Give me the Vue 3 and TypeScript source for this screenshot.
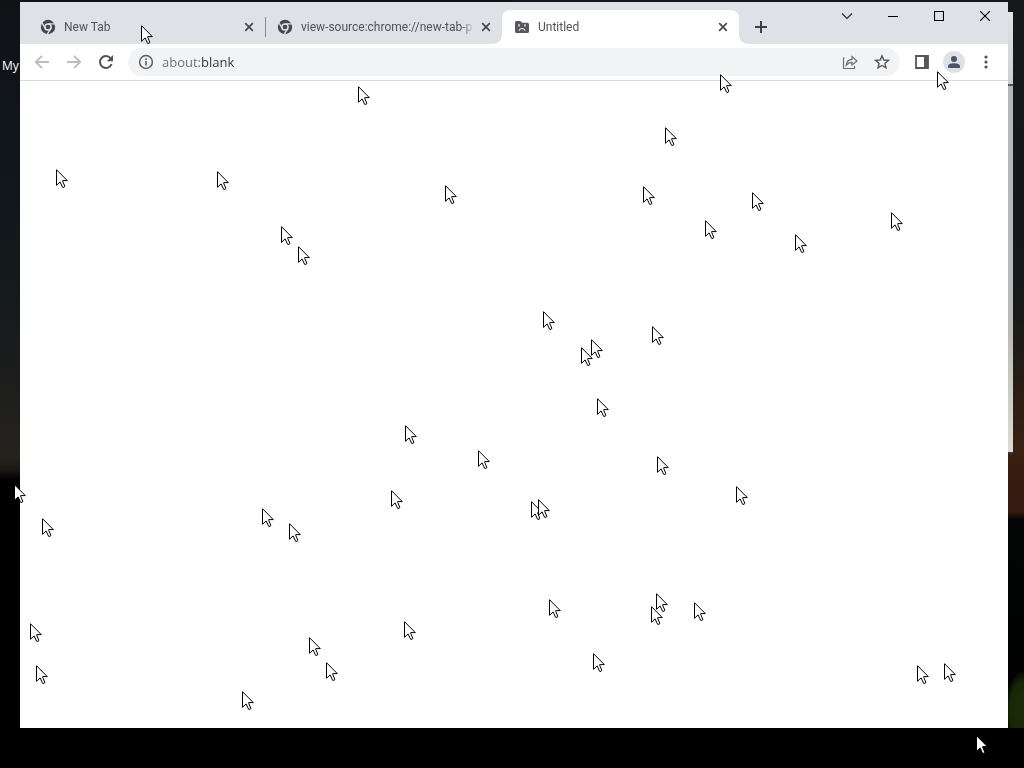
<script setup lang="ts">
import { ref } from 'vue'

interface Tab {
  title: string
  icon: 'chrome' | 'sad'
}
interface Point {
  x: number
  y: number
}

const tabs: Tab[] = [
  { title: 'New Tab', icon: 'chrome' },
  { title: 'view-source:chrome://new-tab-p', icon: 'chrome' },
  { title: 'Untitled', icon: 'sad' },
]
const active = ref(2)
const address = ref('about:blank')

const pointers: Point[] = (
  [
    [141, 25], [358, 86], [720, 74], [937, 71], [665, 127], [56, 169], [217, 171],
    [445, 185], [643, 186], [752, 192], [705, 220], [891, 212], [795, 234], [281, 226],
    [298, 246], [543, 311], [652, 326], [581, 347], [591, 339], [597, 398], [405, 425],
    [478, 450], [657, 456], [736, 486], [391, 490], [531, 501], [538, 499], [262, 508],
    [289, 523], [42, 518], [14, 484], [549, 599], [651, 606], [656, 593], [694, 602],
    [404, 621], [309, 637], [326, 662], [593, 653], [30, 623], [36, 665], [242, 691],
    [917, 665], [944, 663], [976, 735],
  ] as [number, number][]
).map(([x, y]) => ({ x, y }))
</script>

<template>
  <div class="desktop">
    <span class="shortcut">My</span>
    <div class="back-window"></div>

    <main class="window">
      <header class="strip">
        <div class="tabs" role="tablist">
          <div
            v-for="(tab, i) in tabs"
            :key="tab.title"
            class="tab"
            :class="{ active: i === active, divided: i + 1 < active }"
          >
            <button class="tab-main" role="tab" :aria-selected="i === active" @click="active = i">
              <svg v-if="tab.icon === 'chrome'" class="fav" viewBox="0 0 16 16">
                <circle cx="8" cy="8" r="7.2" fill="#45494e" />
                <circle cx="8" cy="8" r="3.1" fill="none" stroke="#dee1e6" stroke-width="1.5" />
                <path d="M8 4.9H15M5.3 9.5 1.9 3.6M10.7 9.5 7.2 15.4" stroke="#dee1e6" stroke-width="1.4" />
              </svg>
              <svg v-else class="fav" viewBox="0 0 16 16">
                <path d="M1 3.6Q1 2 2.6 2H6.4L8 3.7H13.4Q15 3.7 15 5.2V12.4Q15 14 13.4 14H2.6Q1 14 1 12.4Z" fill="#55585c" />
                <path d="M4.2 5.6 5.8 7.2M5.8 5.6 4.2 7.2M10.2 5.6 11.8 7.2M11.8 5.6 10.2 7.2M5 11.8Q5.2 9.5 8 9.5T11 11.8" fill="none" stroke="#fff" stroke-width="1" />
              </svg>
              <span class="title">{{ tab.title }}</span>
            </button>
            <button class="close" :aria-label="'Close ' + tab.title">
              <svg width="10" height="10" viewBox="0 0 10 10"><path d="M1.2 1.2 8.8 8.8M8.8 1.2 1.2 8.8" stroke="#45494e" stroke-width="1.7" /></svg>
            </button>
          </div>
        </div>
        <button class="new-tab" aria-label="New tab">
          <svg width="12" height="12" viewBox="0 0 12 12"><path d="M6 0V12M0 6H12" stroke="#3c4043" stroke-width="2" /></svg>
        </button>
        <div class="controls">
          <button aria-label="Search tabs">
            <svg width="12" height="12" viewBox="0 0 12 12"><path d="M1 3.5 6 8.5 11 3.5" fill="none" stroke="#222" stroke-width="1.1" /></svg>
          </button>
          <button aria-label="Minimize">
            <svg width="10" height="10" viewBox="0 0 10 10"><path d="M0 5.5H10" stroke="#000" /></svg>
          </button>
          <button aria-label="Maximize">
            <svg width="10" height="10" viewBox="0 0 10 10"><path d="M.5.5H9.5V9.5H.5Z" fill="none" stroke="#000" stroke-width="1.1" /></svg>
          </button>
          <button aria-label="Close window">
            <svg width="10" height="10" viewBox="0 0 10 10"><path d="M0 0 10 10M10 0 0 10" stroke="#000" stroke-width="1.1" /></svg>
          </button>
        </div>
      </header>

      <nav class="toolbar">
        <button class="tool" aria-label="Back">
          <svg width="16" height="16" viewBox="0 0 16 16"><path d="M15 8H2M8 1.8 1.8 8 8 14.2" fill="none" stroke="#bcbdbc" stroke-width="1.8" /></svg>
        </button>
        <button class="tool" aria-label="Forward">
          <svg width="16" height="16" viewBox="0 0 16 16"><path d="M1 8H14M8 1.8 14.2 8 8 14.2" fill="none" stroke="#bcbdbc" stroke-width="1.8" /></svg>
        </button>
        <button class="tool" aria-label="Reload">
          <svg width="16" height="16" viewBox="0 0 16 16">
            <path d="M13.6 10A6 6 0 1 1 12.6 4.1" fill="none" stroke="#4e5155" stroke-width="2" />
            <path d="M15 1V7.2H8.8Z" fill="#4e5155" />
          </svg>
        </button>
        <div class="omnibox">
          <button class="info" aria-label="View site information">
            <svg width="16" height="16" viewBox="0 0 16 16">
              <circle cx="8" cy="8" r="6.4" fill="none" stroke="#5a5e63" stroke-width="1.5" />
              <path d="M8 7V11.6M8 4.3V6" stroke="#5a5e63" stroke-width="1.6" />
            </svg>
          </button>
          <input v-model="address" class="address" aria-label="Address" spellcheck="false" />
          <button class="tool" aria-label="Share this page">
            <svg width="16" height="16" viewBox="0 0 16 16">
              <path d="M2.5 4H1.5V14.5H12.5V12M4.2 11.3C4.5 7.5 6.5 5.5 10 5.4V2.6L15 7 10 11V8.4C7.5 8.3 5.8 9.2 4.2 11.3Z" fill="none" stroke="#6b6f74" stroke-width="1.2" />
            </svg>
          </button>
          <button class="tool" aria-label="Bookmark this tab">
            <svg width="16" height="16" viewBox="0 0 16 16">
              <path d="M8 1.8 9.8 6 14.4 6.4 10.9 9.4 12 13.9 8 11.5 4 13.9 5.1 9.4 1.6 6.4 6.2 6Z" fill="none" stroke="#55595e" stroke-width="1.4" />
            </svg>
          </button>
        </div>
        <button class="tool" aria-label="Side panel">
          <svg width="14" height="14" viewBox="0 0 14 14"><path d="M1 1H13V13H1Z" fill="none" stroke="#55585b" stroke-width="1.8" /><path d="M9 1H13V13H9Z" fill="#55585b" /></svg>
        </button>
        <button class="tool" aria-label="Profile">
          <svg width="22" height="22" viewBox="0 0 22 22">
            <circle cx="11" cy="11" r="11" fill="#dde1e8" />
            <circle cx="11" cy="8" r="3" fill="#4c566b" />
            <path d="M5 17V15.2C5 13 8.5 12.2 11 12.2S17 13 17 15.2V17Z" fill="#4c566b" />
          </svg>
        </button>
        <button class="tool" aria-label="Menu">
          <svg width="4" height="14" viewBox="0 0 4 14" fill="#505357"><circle cx="2" cy="2" r="1.6" /><circle cx="2" cy="7" r="1.6" /><circle cx="2" cy="12" r="1.6" /></svg>
        </button>
      </nav>
      <section class="page"></section>
    </main>

    <svg
      v-for="(p, i) in pointers"
      :key="i"
      class="pointer"
      :style="{ left: p.x + 'px', top: p.y + 'px' }"
      width="12"
      height="19"
      viewBox="0 0 12 19"
    >
      <path d="M.5.7V16.3L4.1 12.9 6.6 18.3H8.2L8.8 17.2 6.7 12.3V11.6H11.3Z" fill="#fff" stroke="#000" stroke-width="1" />
    </svg>
  </div>
</template>

<style>
body {
  margin: 0;
  background: #000;
}
</style>

<style scoped>
.desktop {
  position: relative;
  display: flex;
  box-sizing: border-box;
  min-height: 100vh;
  padding: 2px 16px 40px 20px;
  overflow: hidden;
  font-family: 'Open Sans', 'Noto Sans', sans-serif;
  background:
    linear-gradient(#000, #000) bottom / 100% 40px no-repeat,
    radial-gradient(ellipse 20px 40px at 100% 710px, #1d2c0a 0, #182807 70%, transparent 100%) no-repeat,
    linear-gradient(#15191c, #12181c 230px, #191a18 320px, #3a2012 450px, #33190f 512px, #030404 520px, #000 100%) right / 50% 100% no-repeat,
    linear-gradient(#101216, #10161b 150px, #151a1c 300px, #25221d 460px, #1b1814 470px, #000 480px) left / 50% 100% no-repeat;
}
.shortcut {
  position: absolute;
  left: 2px;
  top: 57px;
  font-size: 12px;
  line-height: 18px;
  color: #fff;
}
.back-window {
  position: absolute;
  right: 11px;
  top: 12px;
  width: 8px;
  height: 440px;
  background: linear-gradient(#e2e2e2, #cfcfcf 72px, #555 72px, #555 74px, #b5b6b6 74px, #bababa 320px, #dcdcd4);
  border-bottom: 2px solid #343936;
}
button {
  display: flex;
  align-items: center;
  justify-content: center;
  padding: 0;
  border: 0;
  background: none;
  font: inherit;
  color: inherit;
}
.window {
  position: relative;
  display: flex;
  flex: 1;
  flex-direction: column;
  min-width: 0;
  background: #fff;
}
.strip {
  display: flex;
  height: 42px;
  background: #dee1e6;
}
.tabs {
  display: flex;
  flex: 0 1 711px;
  min-width: 0;
  margin-left: 8px;
  padding-top: 8px;
}
.tab {
  position: relative;
  display: flex;
  flex: 1;
  box-sizing: border-box;
  min-width: 0;
  padding: 0 8px 0 12px;
  color: #50545a;
}
.tab.divided::after {
  content: '';
  position: absolute;
  left: 100%;
  top: 7px;
  width: 1px;
  height: 20px;
  background: #888c92;
}
.tab.active {
  background: #fff;
  border-radius: 8px 8px 0 0;
}
.tab.active::before,
.tab.active::after {
  content: '';
  position: absolute;
  bottom: 0;
  width: 8px;
  height: 8px;
}
.tab.active::before {
  right: 100%;
  background: radial-gradient(circle at 0 0, transparent 7px, #fff 8px);
}
.tab.active::after {
  left: 100%;
  background: radial-gradient(circle at 100% 0, transparent 7px, #fff 8px);
}
.tab-main {
  flex: 1;
  justify-content: flex-start;
  gap: 8px;
  min-width: 0;
}
.fav {
  flex: none;
  width: 16px;
  height: 16px;
}
.title {
  flex: 1;
  overflow: hidden;
  font-family: Roboto, 'Open Sans', sans-serif;
  font-size: 12px;
  line-height: 18px;
  text-align: left;
  white-space: nowrap;
  mask-image: linear-gradient(to left, transparent, #000 12px);
}
.close {
  flex: none;
  width: 16px;
  margin-left: 4px;
}
.new-tab {
  width: 28px;
  margin: 8px 0 0 8px;
}
.controls {
  display: flex;
  margin-left: auto;
}
.controls button {
  width: 46px;
  height: 28px;
}
.toolbar {
  display: flex;
  align-items: center;
  height: 36px;
  padding: 0 6px;
  border-bottom: 1px solid #d9dadc;
}
.tool {
  flex: none;
  width: 32px;
  height: 28px;
}
.omnibox {
  display: flex;
  flex: 1;
  align-items: center;
  box-sizing: border-box;
  min-width: 0;
  height: 28px;
  margin: 0 6px;
  padding: 0 2px 0 10px;
  border-radius: 14px;
  background: #f1f3f4;
}
.info {
  flex: none;
  width: 16px;
}
.address {
  flex: 1;
  min-width: 0;
  height: 20px;
  margin-left: 8px;
  padding: 0;
  border: 0;
  outline: 0;
  font: 13px/20px 'Open Sans', 'Noto Sans', sans-serif;
  color: transparent;
  caret-color: #303236;
  background: linear-gradient(90deg, #6a6e73 40px, #303236 40px);
  background-clip: text;
}
.page {
  flex: 1;
}
.pointer {
  position: absolute;
  pointer-events: none;
}
</style>
